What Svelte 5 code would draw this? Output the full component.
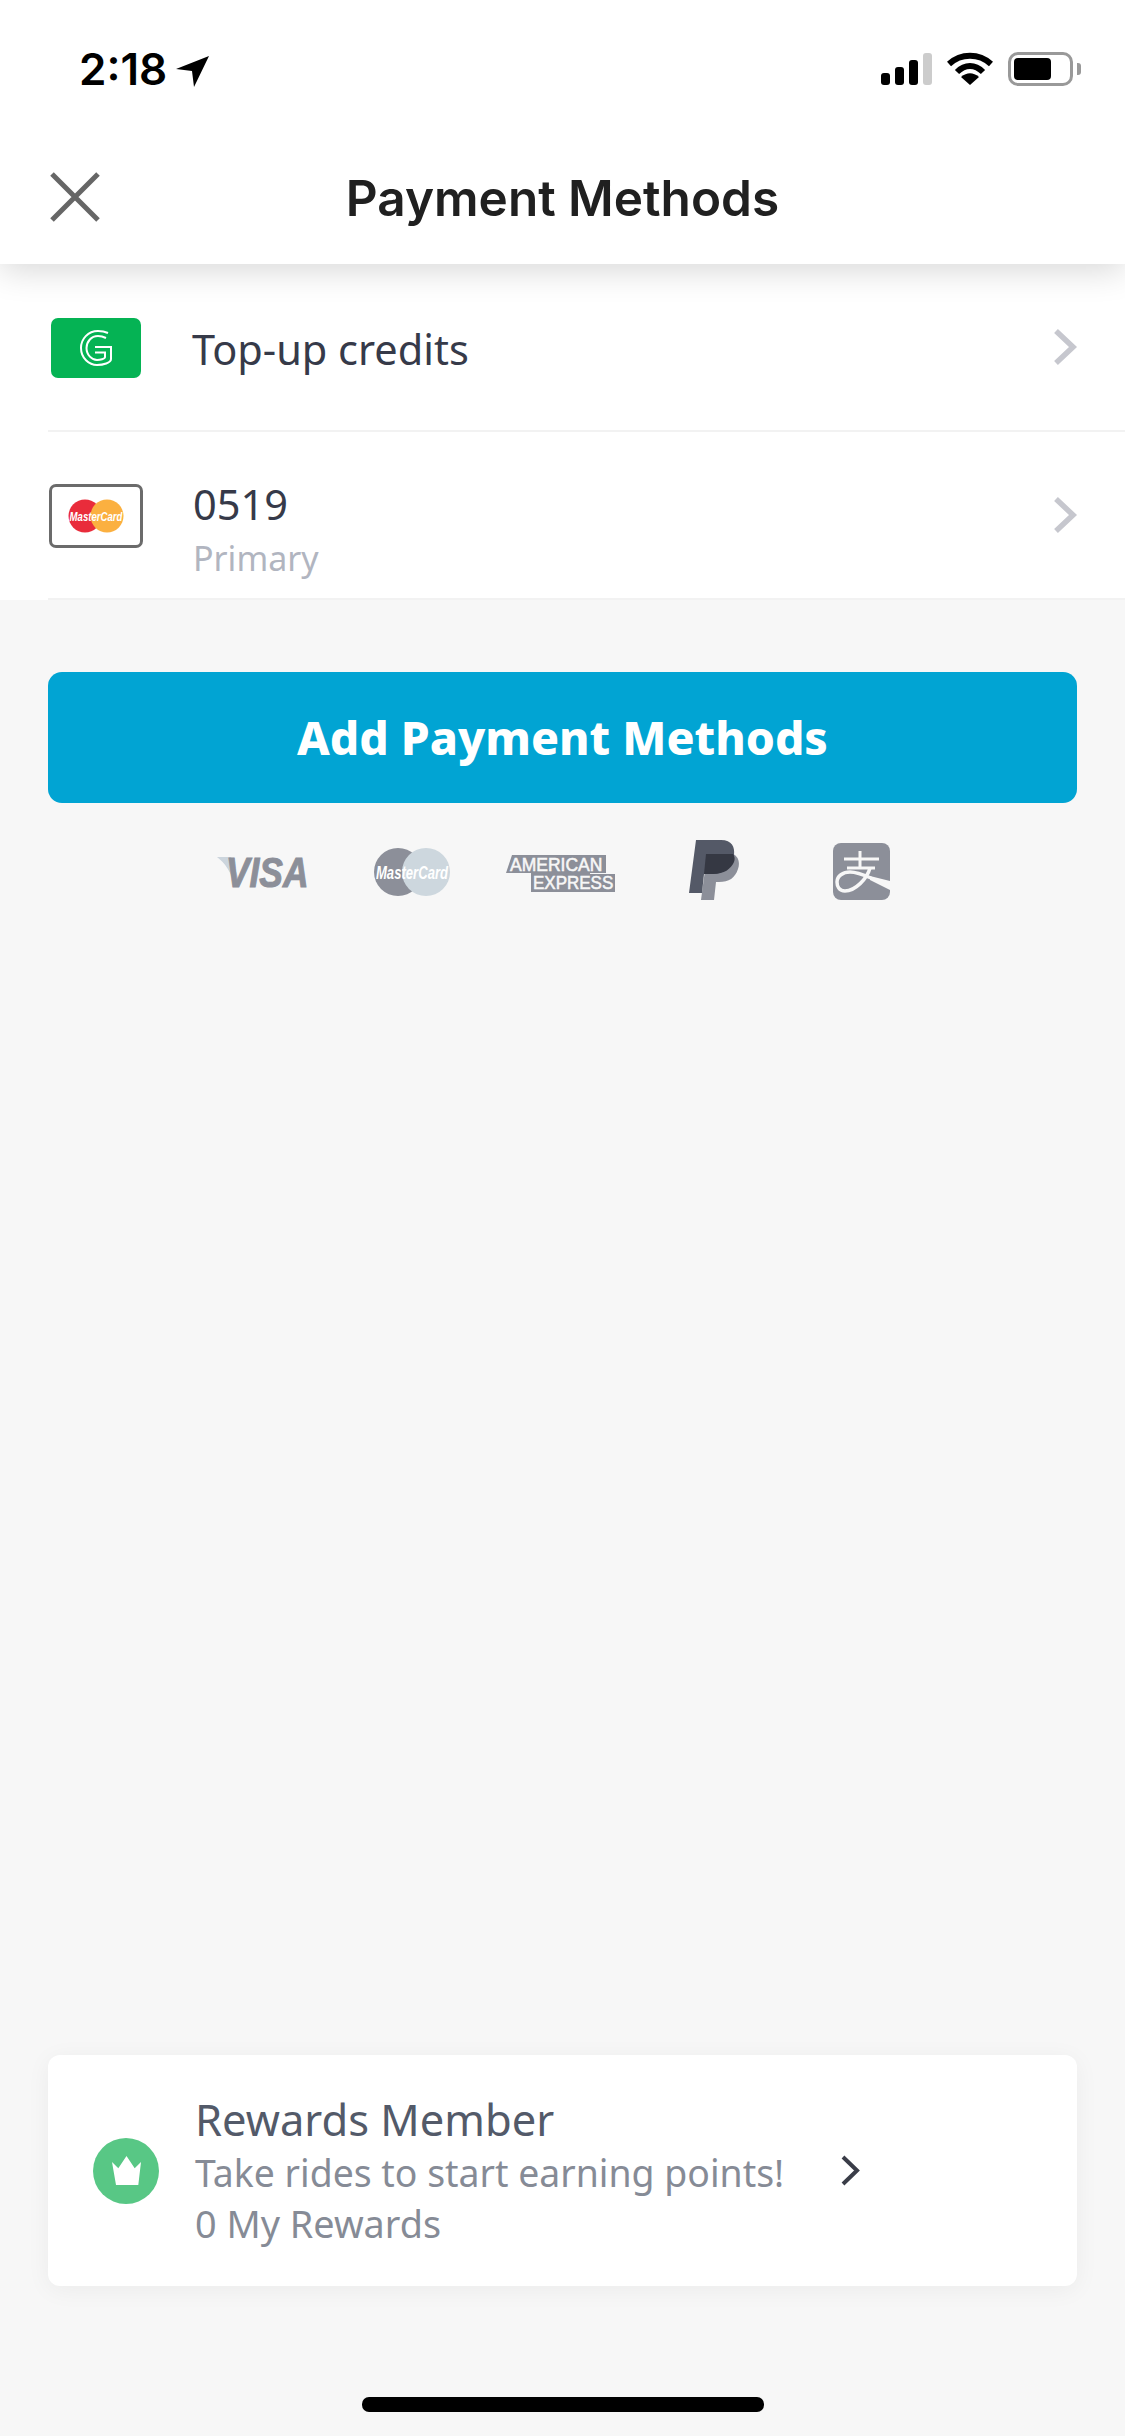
<script>
  const rows = [
    { id: 'credits', title: 'Top-up credits' },
    { id: 'card', title: '0519', sub: 'Primary' }
  ];
</script>

<div class="screen">
  <header class="top">
    <div class="status">
      <div class="clock">
        <span class="time">2:18</span>
        <svg class="arrow" width="33" height="31" viewBox="0 0 33 31"><path d="M33 0 L0 13 L16 15 L18 31 Z" fill="#000" /></svg>
      </div>
      <div class="indicators">
        <div class="bars">
          <i class="bar" style:height="12px"></i>
          <i class="bar" style:height="18px"></i>
          <i class="bar" style:height="25px"></i>
          <i class="bar off" style:height="32px"></i>
        </div>
        <svg class="wifi" width="46" height="33" viewBox="0 0 46 33">
          <path d="M2 12 C14 1 32 1 44 12" fill="none" stroke="#000" stroke-width="6" />
          <path d="M10 20 C18 12 28 12 36 20" fill="none" stroke="#000" stroke-width="6" />
          <path d="M14 25 C20 20 26 20 32 25 L23 33 Z" fill="#000" />
        </svg>
        <div class="battery"><div class="level"></div></div>
        <i class="cap"></i>
      </div>
    </div>
    <nav class="nav">
      <svg class="close" width="50" height="50" viewBox="0 0 50 50"><path d="M2 2 L48 48 M48 2 L2 48" stroke="#666" stroke-width="5" /></svg>
      <h1>Payment Methods</h1>
    </nav>
  </header>

  <section class="list">
    {#each rows as row}
      <div class="row">
        {#if row.id === 'credits'}
          <div class="thumb green">
            <svg width="32" height="36" viewBox="0 0 32 36" fill="none" stroke="#fff" stroke-width="2">
              <path d="M28 3 C24 1.200 21 1 18 1 C8 1 1 9 1 18 C1 28 9 35 17 35 C23 35 31 33 31 29 L31 17 L15 17" />
              <path d="M26 8 C23 6.500 20.500 6 18 6 C11 6 6.500 12 6.500 18 C6.500 25 12 30 17 30 C20 30 25 29 25 27 L25 22.500 L15 22.500" />
            </svg>
          </div>
        {:else}
          <div class="thumb outlined">
            <svg width="56" height="34" viewBox="0 0 56 34">
              <circle cx="17" cy="17" r="16.500" fill="#e92c3b" />
              <circle cx="39" cy="17" r="16.500" fill="#fbb040" />
              <text transform="translate(28 22) scale(0.74 1)" text-anchor="middle" class="mc-small">MasterCard</text>
            </svg>
          </div>
        {/if}
        <div class="row-text" class:two={row.sub}>
          <div class="row-title">{row.title}</div>
          {#if row.sub}<div class="row-sub">{row.sub}</div>{/if}
        </div>
        <svg class="chev" width="25" height="38" viewBox="0 0 25 38"><path d="M3 3 L20 19 L3 35" fill="none" stroke="#c6c7ce" stroke-width="5.500" /></svg>
      </div>
    {/each}
  </section>

  <button class="add" type="button">Add Payment Methods</button>

  <div class="brands">
    <svg class="visa" width="91" height="32" viewBox="0 0 91 32">
      <path d="M0 1 L14 1 L22 24 L18 30 C14 16 8 7 0 1 Z" fill="#ccd5dd" />
      <text transform="translate(9 30.500) scale(0.93 1.100)" class="visa-text">VISA</text>
    </svg>
    <svg class="master" width="76" height="48" viewBox="0 0 76 48">
      <circle cx="24" cy="24" r="24" fill="#8c8f99" />
      <circle cx="52" cy="24" r="24" fill="#cdd7de" />
      <text transform="translate(38 31) scale(0.69 1)" text-anchor="middle" class="mc-big">MasterCard</text>
    </svg>
    <svg class="amex" width="109" height="37" viewBox="0 0 109 37">
      <path d="M6 0 L100 0 L100 18 L84 18 L84 19 L109 19 L109 37 L25 37 L25 18 L0 18 Z" fill="#8c8f99" />
      <text transform="translate(4 15.500) scale(1.030 1.100)" class="amex-text">AMERICAN</text>
      <text transform="translate(27 34) scale(1 1.100)" class="amex-text">EXPRESS</text>
    </svg>
    <svg class="paypal" width="50" height="60" viewBox="0 0 50 60">
      <path d="M22 14 L44 14 C50 17 51 23 49 29 C46 38 40 42 30 42 L27 42 L25 60 L12 60 L16 30 Z" fill="#8c8f99" />
      <path d="M7 0 L32 0 C43 0 46 7 45 15 C43 27 35 34 24 34 L15 34 L13 53 L0 53 Z" fill="#545967" />
      <path d="M17 14 L44 14 C46 17 46 19 45 22 C42 29 35 34 24 34 L15 34 Z" fill="#353843" />
    </svg>
    <svg class="alipay" width="57" height="57" viewBox="0 0 57 57">
      <rect width="57" height="57" rx="8" fill="#8c8f99" />
      <path d="M11 16 L46 16 M14 25 L42 25 M27 8 L27 25" stroke="#f7f7f7" stroke-width="3" fill="none" />
      <path d="M37 25 C34 36 22 48 12 48 C6 48 4 43 4 39 C4 33 10 29 17 29 C24 29 31 32 38 35" stroke="#f7f7f7" stroke-width="3.500" fill="none" />
      <path d="M37 33 L57 38 L57 47 L37 37 Z" fill="#f7f7f7" />
    </svg>
  </div>

  <div class="fill"></div>

  <div class="rewards">
    <div class="badge">
      <svg width="29" height="29" viewBox="0 0 29 29"><path d="M0 6 L6.300 12.300 L14.500 0 L22.700 12.300 L29 6 L26.300 29 L4 29 Z" fill="#fff" /></svg>
    </div>
    <div class="rewards-text">
      <div class="rewards-title">Rewards Member</div>
      <div class="rewards-line">Take rides to start earning points!</div>
      <div class="rewards-line wide">0 My Rewards</div>
    </div>
    <svg class="rewards-chev" width="19" height="31" viewBox="0 0 19 31"><path d="M2 2 L16 15.500 L2 29" fill="none" stroke="#3a3d48" stroke-width="4" /></svg>
  </div>

  <div class="home"><i></i></div>
</div>

<style>
  :global(body) {
    margin: 0;
    background: #f7f7f7;
  }

  .screen {
    width: 1125px;
    height: 2436px;
    display: flex;
    flex-direction: column;
    background: #f7f7f7;
    font-family: "Noto Sans", "Open Sans", sans-serif;
    overflow: hidden;
  }

  .top {
    height: 264px;
    flex: none;
    background: #fff;
    box-shadow: 0 6px 32px rgba(0, 0, 0, 0.16);
    position: relative;
    z-index: 1;
  }

  .status {
    height: 132px;
    box-sizing: border-box;
    padding: 52px 44px 0 79px;
    display: flex;
    justify-content: space-between;
    align-items: flex-start;
  }

  .clock {
    display: flex;
    align-items: flex-start;
    gap: 9px;
  }

  .time {
    font-family: Inter, sans-serif;
    font-size: 44px;
    line-height: 34px;
    font-weight: 600;
    color: #000;
  }

  .arrow {
    margin-top: 4px;
  }

  .indicators {
    display: flex;
    align-items: flex-start;
  }

  .bars {
    display: flex;
    align-items: flex-end;
    gap: 5px;
    height: 33px;
  }

  .bar {
    display: block;
    width: 9px;
    border-radius: 3px;
    background: #000;
  }

  .bar.off {
    background: #ccc;
  }

  .wifi {
    margin-left: 15px;
  }

  .battery {
    width: 65px;
    height: 34px;
    box-sizing: border-box;
    margin-left: 15px;
    padding: 3px;
    border: 3px solid #999;
    border-radius: 10px;
  }

  .level {
    width: 37px;
    height: 22px;
    border-radius: 4px;
    background: #000;
  }

  .cap {
    display: block;
    width: 4px;
    height: 12px;
    margin: 11px 0 0 4px;
    border-radius: 0 3px 3px 0;
    background: #999;
  }

  .nav {
    height: 132px;
    position: relative;
    display: flex;
    align-items: center;
    justify-content: center;
  }

  .close {
    position: absolute;
    left: 50px;
    top: 40px;
  }

  h1 {
    margin: 0;
    font-family: Inter, sans-serif;
    font-size: 49.500px;
    font-weight: 600;
    color: #202020;
  }

  .list {
    flex: none;
    height: 336px;
    background: #fff;
  }

  .row {
    height: 168px;
    box-sizing: border-box;
    margin-left: 48px;
    padding: 0 47px 0 0;
    display: flex;
    align-items: center;
    border-bottom: 2px solid #f2f2f2;
  }

  .thumb {
    flex: none;
    box-sizing: border-box;
    width: 94px;
    height: 64px;
    margin-top: 1px;
    margin-right: 50px;
    display: flex;
    align-items: center;
    justify-content: center;
    border-radius: 7px;
  }

  .thumb.green {
    width: 90px;
    height: 60px;
    margin: 2px 51px 0 3px;
    background: #05b354;
  }

  .thumb.outlined {
    margin-left: 1px;
    border: 3px solid #6b6b6b;
  }

  .mc-small {
    font-family: "Liberation Sans", sans-serif;
    font-size: 13px;
    font-style: italic;
    font-weight: 700;
    fill: #fff;
  }

  .row-text {
    flex: 1;
    margin-top: 3px;
  }

  .row-text.two {
    margin-top: 29px;
  }

  .row-title {
    font-size: 41.500px;
    line-height: 52px;
    color: #363a49;
  }

  .row-sub {
    margin-top: 5px;
    font-size: 34px;
    line-height: 46px;
    color: #b1b5c0;
  }

  .add {
    flex: none;
    display: block;
    width: 1029px;
    height: 131px;
    margin: 72px 0 0 48px;
    padding: 0;
    border: 0;
    border-radius: 14px;
    background: #01a4d3;
    color: #fff;
    font-family: inherit;
    font-size: 46.300px;
    font-weight: 800;
  }

  .brands {
    flex: none;
    height: 60px;
    margin-top: 37px;
    padding-left: 217px;
    display: flex;
    align-items: center;
  }

  .visa,
  .amex {
    overflow: visible;
  }

  .visa { margin-top: 3px; }
  .master { margin: 3px 0 0 66px; }

  .visa-text {
    font-family: "Liberation Sans", sans-serif;
    font-size: 38px;
    font-style: italic;
    font-weight: 700;
    fill: #8c8f99;
    stroke: #8c8f99;
    stroke-width: 1px;
  }

  .mc-big {
    font-family: "Liberation Sans", sans-serif;
    font-size: 19px;
    font-style: italic;
    font-weight: 700;
    fill: #fff;
  }

  .amex { margin: 6px 0 0 56px; }

  .amex-text {
    font-family: "Liberation Sans", sans-serif;
    font-size: 17px;
    font-weight: 400;
    fill: #f7f7f7;
    stroke: #f7f7f7;
    stroke-width: 0.500px;
  }

  .paypal { margin-left: 74px; }
  .alipay { margin: 3px 0 0 94px; }

  .fill {
    flex: 1;
  }

  .rewards {
    flex: none;
    width: 1029px;
    height: 231px;
    margin-left: 48px;
    box-sizing: border-box;
    padding-left: 45px;
    display: flex;
    align-items: center;
    background: #fff;
    border-radius: 12px;
    box-shadow: 0 4px 24px rgba(0, 0, 0, 0.05);
  }

  .badge {
    flex: none;
    width: 66px;
    height: 66px;
    margin-right: 36px;
    border-radius: 50%;
    background: #58c785;
    display: flex;
    align-items: center;
    justify-content: center;
  }

  .rewards-title {
    font-size: 43.500px;
    line-height: 54px;
    margin-top: -1px;
    margin-bottom: 1px;
    color: #535a69;
  }

  .rewards-line {
    font-size: 37.400px;
    line-height: 51px;
    color: #868b96;
  }

  .rewards-line.wide {
    font-size: 37.800px;
  }

  .rewards-chev {
    margin-left: 57px;
  }

  .home {
    flex: none;
    height: 150px;
    display: flex;
    justify-content: center;
    align-items: flex-end;
    box-sizing: border-box;
    padding-bottom: 24px;
  }

  .home i {
    display: block;
    width: 402px;
    height: 15px;
    border-radius: 7px;
    background: #000;
  }
</style>
